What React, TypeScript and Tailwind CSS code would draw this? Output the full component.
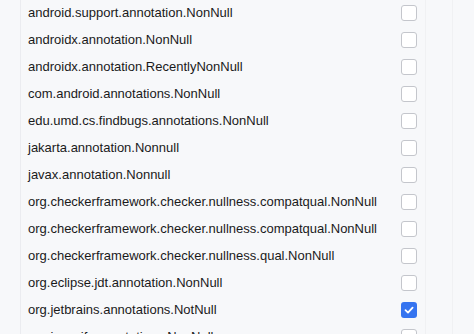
import React from "react";

const items: { name: string; checked?: boolean }[] = [
  { name: "android.support.annotation.NonNull" },
  { name: "androidx.annotation.NonNull" },
  { name: "androidx.annotation.RecentlyNonNull" },
  { name: "com.android.annotations.NonNull" },
  { name: "edu.umd.cs.findbugs.annotations.NonNull" },
  { name: "jakarta.annotation.Nonnull" },
  { name: "javax.annotation.Nonnull" },
  { name: "org.checkerframework.checker.nullness.compatqual.NonNull" },
  { name: "org.checkerframework.checker.nullness.compatqual.NonNull" },
  { name: "org.checkerframework.checker.nullness.qual.NonNull" },
  { name: "org.eclipse.jdt.annotation.NonNull" },
  { name: "org.jetbrains.annotations.NotNull", checked: true },
  { name: "org.jspecify.annotations.NonNull" },
];

function Box({ checked }: { checked?: boolean }) {
  if (checked) {
    return (
      <div className="w-[16px] h-[16px] rounded-[3px] bg-[#3574f0] flex items-center justify-center">
        <svg width="12" height="12" viewBox="0 0 12 12" fill="none">
          <path d="M2.5 6.2 L5 8.6 L9.6 3.6" stroke="white" strokeWidth="1.8" strokeLinecap="round" strokeLinejoin="round" />
        </svg>
      </div>
    );
  }
  return <div className="w-[16px] h-[16px] rounded-[3px] border border-[#c4c6cc] bg-white" />;
}

export default function App() {
  return (
    <div className="w-[474px] h-[334px] overflow-hidden bg-[#f7f8fa] flex" style={{ fontFamily: "'Liberation Sans', Arial, sans-serif" }}>
      <div className="w-[21px] shrink-0 border-r border-[#ebecf0]" />
      <div className="w-[405px] shrink-0 border-r border-[#f0f1f3]">
        <div className="mt-[-1px] flex flex-col">
          {items.map((it, i) => (
            <div key={i} className="h-[27px] flex items-center pl-[7px] pr-[8px]">
              <span className="flex-1 text-[13px] text-[#1a1a1a] whitespace-nowrap">{it.name}</span>
              <Box checked={it.checked} />
            </div>
          ))}
        </div>
      </div>
      <div className="w-[27px] shrink-0 border-r border-[#f0f1f3]" />
      <div className="flex-1" />
    </div>
  );
}
